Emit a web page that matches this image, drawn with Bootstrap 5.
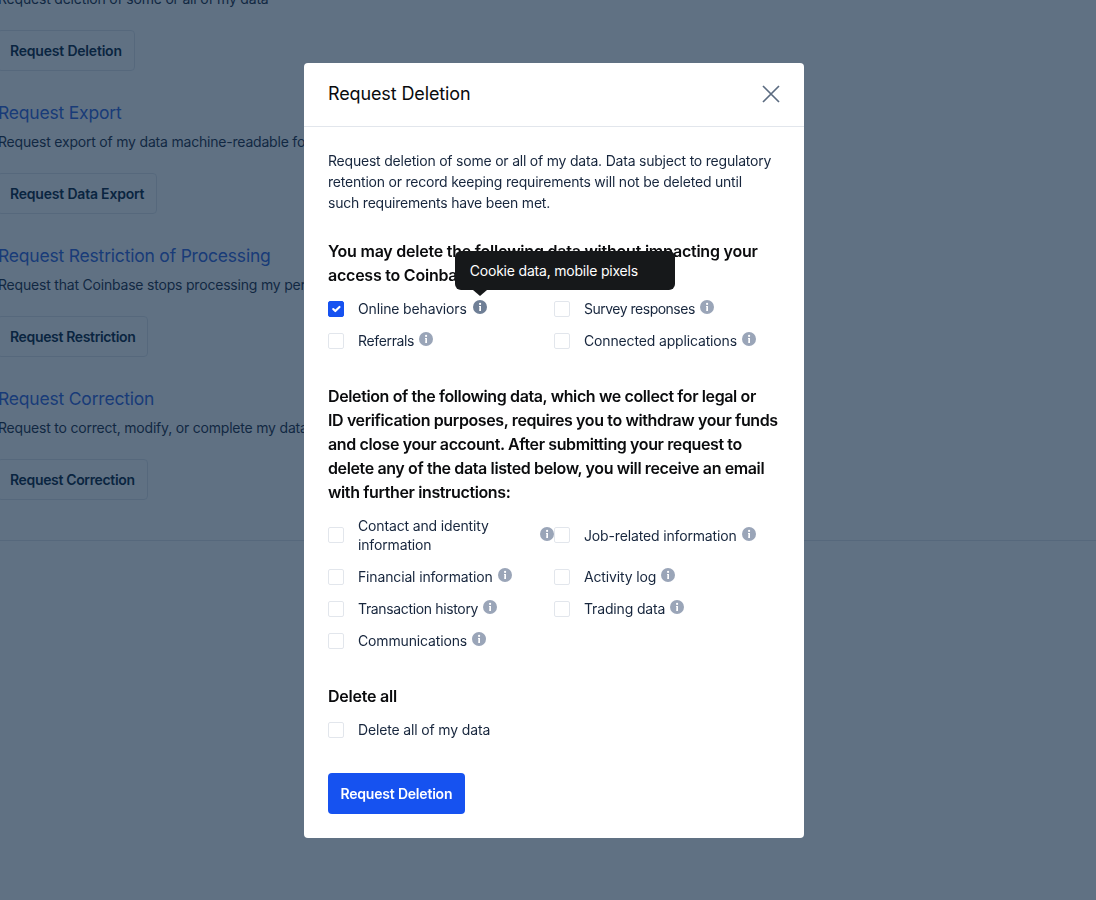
<!DOCTYPE html>
<html lang="en">
<head>
<meta charset="utf-8">
<title>Request Deletion</title>
<link href="https://cdn.jsdelivr.net/npm/bootstrap@5.3.0/dist/css/bootstrap.min.css" rel="stylesheet">
<style>
html,body{height:900px;overflow:hidden;background:#fff;}
body{font-family:"Inter","Noto Sans",sans-serif;color:#0a0b0d;}
.page-bg{margin-left:-2px;margin-top:-12px;}
.bg-section{height:143px;padding-top:2px;}
.bg-section h3{font-size:17.5px;letter-spacing:-.2px;font-weight:400;color:#3566e0;line-height:24px;margin:0 0 6px;}
.bg-section p{font-size:14px;letter-spacing:-.2px;line-height:21px;color:#1f2f47;margin:0 0 21px;white-space:nowrap;}
.bg-btn{display:inline-block;font-size:14px;font-weight:600;letter-spacing:-.2px;line-height:21px;color:#0a2540;padding:9px 12px;border:1px solid #e2e6ec;border-radius:4px;background:#fff;margin-left:-1px;}
.first-sec{height:111px;padding-top:0;}
.bg-rule{border-top:1px solid #e2e6ec;margin-top:12px;}
.veil{position:fixed;inset:0;background:rgba(10,37,64,.65);z-index:10;}
.sheet{position:absolute;left:304px;top:63px;width:500px;z-index:20;border:0;border-radius:4px;background:#fff;}
.sheet-head{height:64px;padding:0 23px 2px 24px;border-bottom:1px solid #e2e6ec;}
.sheet-head h5{font-size:18px;font-weight:400;letter-spacing:-.12px;margin:0;line-height:24px;}
.sheet-body{padding:23px 24px 24px;}
.intro{font-size:14px;letter-spacing:-.21px;line-height:21px;margin:0 0 26px;color:#17263d;max-width:446px;}
.sec-title{font-size:16px;font-weight:600;letter-spacing:-.23px;line-height:24px;margin:0 0 12px;}
.sec-long{letter-spacing:-.38px;}
.opt{font-size:14px;letter-spacing:-.15px;line-height:19px;margin-bottom:13px;color:#17263d;}
.opt .form-check-input{width:16px;height:16px;margin:0 14px 0 0;flex:none;border:1px solid #e2e6ec;border-radius:2px;box-shadow:none;}
.opt .form-check-input:checked{background-color:#1652f0;border-color:#1652f0;}
.opt label{margin:0;}
.squeeze{letter-spacing:-.35px;}
.squeeze-more{letter-spacing:-.5px;}
.hint{position:relative;flex:none;margin:0 0 3px 5px;width:14px;height:14px;display:block;color:#9aa5b8;}
.hint svg{display:block;}
.hint-active{color:#6f7f96;margin-left:6px;}
.tip{position:absolute;left:-18px;top:-49px;width:220px;height:39px;background:#16181a;color:#fff;border-radius:6px;font-size:14px;letter-spacing:-.2px;line-height:39px;padding-left:15px;z-index:30;}
.tip::after{content:"";position:absolute;left:18px;bottom:-6px;border-left:7px solid transparent;border-right:7px solid transparent;border-top:6px solid #16181a;}
.send{background:#1652f0;border:0;color:#fff;font-size:14px;font-weight:600;letter-spacing:-.2px;line-height:21px;padding:10px 12.5px;border-radius:4px;}
.gap-a{margin-top:21px;}
.gap-b{margin-top:21px;}
.gap-c{margin-top:34px;}
</style>
</head>
<body>
<div class="page-bg">
  <div class="bg-section first-sec">
    <p>Request deletion of some or all of my data</p>
    <span class="bg-btn">Request Deletion</span>
  </div>
  <div class="bg-section">
    <h3>Request Export</h3>
    <p>Request export of my data machine-readable format</p>
    <span class="bg-btn">Request Data Export</span>
  </div>
  <div class="bg-section">
    <h3>Request Restriction of Processing</h3>
    <p>Request that Coinbase stops processing my personal data</p>
    <span class="bg-btn squeeze">Request Restriction</span>
  </div>
  <div class="bg-section">
    <h3>Request Correction</h3>
    <p>Request to correct, modify, or complete my data</p>
    <span class="bg-btn squeeze">Request Correction</span>
  </div>
</div>
<div class="bg-rule"></div>
<div class="veil"></div>

<svg width="0" height="0" class="position-absolute">
  <symbol id="info" viewBox="0 0 14 14">
    <circle cx="7" cy="7" r="7" fill="currentColor"/>
    <circle cx="7.1" cy="3.9" r="1.1" fill="#fff"/>
    <path d="M6 6h2v5H6.2l.2-3.9H6z" fill="#fff"/>
  </symbol>
</svg>

<div class="sheet card">
  <div class="sheet-head d-flex align-items-center justify-content-between">
    <h5>Request Deletion</h5>
    <svg width="20" height="20" viewBox="0 0 20 20"><path d="M2 2l16 16M18 2L2 18" stroke="#5b6b80" stroke-width="1.7" fill="none"/></svg>
  </div>
  <div class="sheet-body">
    <p class="intro">Request deletion of some or all of my data. Data subject to regulatory retention or record keeping requirements will not be deleted until such requirements have been met.</p>
    <h6 class="sec-title">You may delete the following data without impacting your access to Coinbase services.</h6>
    <div class="row g-0">
      <div class="col-6 d-flex align-items-center opt"><input class="form-check-input" type="checkbox" id="c1" checked><label for="c1">Online behaviors</label><span class="hint hint-active"><svg width="14" height="14"><use href="#info"/></svg><span class="tip">Cookie data, mobile pixels</span></span></div>
      <div class="col-6 d-flex align-items-center opt"><input class="form-check-input" type="checkbox" id="c2"><label for="c2" class="squeeze-more">Survey responses</label><span class="hint"><svg width="14" height="14"><use href="#info"/></svg></span></div>
      <div class="col-6 d-flex align-items-center opt"><input class="form-check-input" type="checkbox" id="c3"><label for="c3" class="squeeze">Referrals</label><span class="hint"><svg width="14" height="14"><use href="#info"/></svg></span></div>
      <div class="col-6 d-flex align-items-center opt"><input class="form-check-input" type="checkbox" id="c4"><label for="c4">Connected applications</label><span class="hint"><svg width="14" height="14"><use href="#info"/></svg></span></div>
    </div>
    <h6 class="sec-title sec-long gap-a">Deletion of the following data, which we collect for legal or<br>ID verification purposes, requires you to withdraw your funds and close your account. After submitting your request to delete any of the data listed below, you will receive an email with further instructions:</h6>
    <div class="row g-0">
      <div class="col-6 d-flex align-items-center opt"><input class="form-check-input" type="checkbox" id="d1"><label for="d1">Contact and identity information</label><span class="hint"><svg width="14" height="14"><use href="#info"/></svg></span></div>
      <div class="col-6 d-flex align-items-center opt"><input class="form-check-input" type="checkbox" id="d2"><label for="d2">Job-related information</label><span class="hint"><svg width="14" height="14"><use href="#info"/></svg></span></div>
      <div class="col-6 d-flex align-items-center opt"><input class="form-check-input" type="checkbox" id="d3"><label for="d3">Financial information</label><span class="hint"><svg width="14" height="14"><use href="#info"/></svg></span></div>
      <div class="col-6 d-flex align-items-center opt"><input class="form-check-input" type="checkbox" id="d4"><label for="d4">Activity log</label><span class="hint"><svg width="14" height="14"><use href="#info"/></svg></span></div>
      <div class="col-6 d-flex align-items-center opt"><input class="form-check-input" type="checkbox" id="d5"><label for="d5" class="squeeze">Transaction history</label><span class="hint"><svg width="14" height="14"><use href="#info"/></svg></span></div>
      <div class="col-6 d-flex align-items-center opt"><input class="form-check-input" type="checkbox" id="d6"><label for="d6">Trading data</label><span class="hint"><svg width="14" height="14"><use href="#info"/></svg></span></div>
      <div class="col-6 d-flex align-items-center opt"><input class="form-check-input" type="checkbox" id="d7"><label for="d7">Communications</label><span class="hint"><svg width="14" height="14"><use href="#info"/></svg></span></div>
    </div>
    <h6 class="sec-title gap-b">Delete all</h6>
    <div class="d-flex align-items-center opt"><input class="form-check-input" type="checkbox" id="e1"><label for="e1">Delete all of my data</label></div>
    <button class="send gap-c d-block" type="button">Request Deletion</button>
  </div>
</div>
<script src="https://cdn.jsdelivr.net/npm/bootstrap@5.3.0/dist/js/bootstrap.bundle.min.js"></script>
</body>
</html>
